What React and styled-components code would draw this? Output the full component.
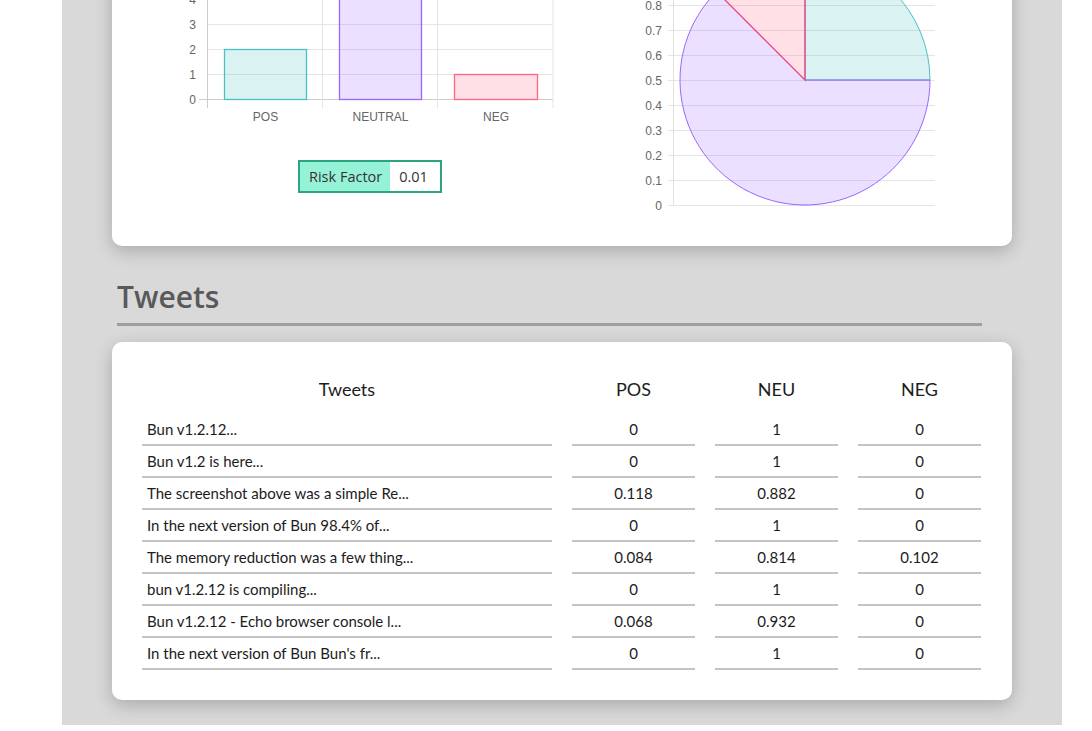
import React from "react";
import styled, { createGlobalStyle } from "styled-components";

const Global = createGlobalStyle`
  html, body { margin: 0; padding: 0; background: #ffffff; overflow: hidden; }
  body { font-family: "Lato", "Open Sans", sans-serif; }
`;

const Page = styled.div`
  display: flex;
  flex-direction: column;
  width: 1000px;
  margin-left: 62px;
  box-sizing: border-box;
  padding: 0 50px 25px;
  background: #d9d9d9;
`;

const Card = styled.div`
  background: #fff;
  border-radius: 10px;
  box-shadow: 0 5px 18px rgba(0, 0, 0, 0.22);
  box-sizing: border-box;
`;

const ChartCard = styled(Card)`
  margin-top: -60px;
  display: grid;
  grid-template-columns: 450px 450px;
  align-items: start;
`;

const ChartCol = styled.div`
  display: flex;
  flex-direction: column;
  padding-bottom: ${(p) => p.$pb || 0}px;
`;

const RiskBox = styled.div`
  display: flex;
  align-self: flex-start;
  margin: 35px 0 0 186px;
  border: 2px solid #2aa57f;
  height: 29px;
  font-family: "Open Sans", sans-serif;
  font-size: 14.5px;
  color: #333;
`;

const RiskLabel = styled.span`
  display: flex;
  align-items: center;
  padding: 0 8px 0 9px;
  background: #96f2d7;
`;

const RiskValue = styled.span`
  display: flex;
  align-items: center;
  padding: 0 12px 0 9px;
  background: #fff;
`;

const Heading = styled.h2`
  margin: 29px 30px 16px 5px;
  padding: 2px 0 6px;
  border-bottom: 3px solid #9e9e9e;
  font-family: "Open Sans", sans-serif;
  font-weight: 600;
  font-size: 30px;
  line-height: 40px;
  color: #595959;
`;

const TableCard = styled(Card)`
  padding: 32px 31px 30px 30px;
`;

const Grid = styled.div`
  display: grid;
  grid-template-columns: 410px repeat(3, 123px);
  column-gap: 20px;
  font-family: "Lato", sans-serif;
  color: #1c1c1c;
`;

const HeadCell = styled.div`
  height: 30px;
  margin-bottom: 10px;
  line-height: 30px;
  text-align: center;
  font-size: 18px;
`;

const Cell = styled.div`
  height: 30px;
  line-height: 30px;
  border-bottom: 2px solid #c4c4c4;
  font-size: 15px;
  text-align: ${(p) => (p.$left ? "left" : "center")};
  padding-left: ${(p) => (p.$left ? "5px" : "0")};
  white-space: nowrap;
`;

const AXIS_FONT = { fontFamily: "Liberation Sans, Arial, sans-serif", fontSize: 12, fill: "#666" };

function BarChart() {
  const bars = [
    { x: 112, w: 82, v: 2, label: "POS", fill: "rgba(75,192,192,0.2)", stroke: "rgb(75,192,192)" },
    { x: 227, w: 82, v: 5, label: "NEUTRAL", fill: "rgba(153,102,255,0.2)", stroke: "rgb(153,102,255)" },
    { x: 342, w: 83, v: 1, label: "NEG", fill: "rgba(255,99,132,0.2)", stroke: "rgb(255,99,132)" },
  ];
  const y0 = 159.5;
  return (
    <svg width="450" height="185" viewBox="0 0 450 185">
      {[0, 1, 2, 3, 4, 5, 6].map((v) => (
        <g key={v}>
          <line x1={v === 0 ? 87 : 95} x2="441" y1={y0 - 25 * v} y2={y0 - 25 * v} stroke={v === 0 ? "#ccc" : "#e5e5e5"} />
          <text x="84" y={y0 - 25 * v + 4} textAnchor="end" {...AXIS_FONT}>{v}</text>
        </g>
      ))}
      {[95.5, 210.5, 325.5, 441].map((x, i) => (
        <line key={x} x1={x} x2={x} y1="0" y2="168" stroke={i === 0 ? "#ccc" : "#e5e5e5"} />
      ))}
      {bars.map((b) => (
        <g key={b.label}>
          <rect x={b.x + 0.5} y={y0 - 25 * b.v} width={b.w} height={25 * b.v} fill={b.fill} stroke={b.stroke} strokeWidth="1.3" />
          <text x={b.x + b.w / 2 + 0.5} y="181" textAnchor="middle" {...AXIS_FONT}>{b.label}</text>
        </g>
      ))}
    </svg>
  );
}

function PieChart() {
  const cx = 243;
  const cy = 140;
  const r = 125;
  const d = r * Math.SQRT1_2;
  const yFor = (v) => 265.5 - v * 250;
  const vals = [0, 0.1, 0.2, 0.3, 0.4, 0.5, 0.6, 0.7, 0.8, 0.9, 1];
  return (
    <svg width="450" height="275" viewBox="0 0 450 275">
      {vals.map((v) => (
        <g key={v}>
          <line x1="106" x2="373" y1={yFor(v)} y2={yFor(v)} stroke="#e5e5e5" />
          <text x="100" y={yFor(v) + 4} textAnchor="end" {...AXIS_FONT}>{v}</text>
        </g>
      ))}
      <line x1="111.5" x2="111.5" y1="0" y2="266" stroke="#e0e0e0" />
      <path
        d={`M${cx} ${cy} L${cx} ${cy - r} A${r} ${r} 0 0 1 ${cx + r} ${cy} Z`}
        fill="rgba(75,192,192,0.2)"
        stroke="rgb(75,192,192)"
        strokeWidth="1"
      />
      <path
        d={`M${cx} ${cy} L${cx + r} ${cy} A${r} ${r} 0 1 1 ${cx - d} ${cy - d} Z`}
        fill="rgba(153,102,255,0.2)"
        stroke="rgb(153,102,255)"
        strokeWidth="1"
      />
      <path
        d={`M${cx} ${cy} L${cx - d} ${cy - d} A${r} ${r} 0 0 1 ${cx} ${cy - r} Z`}
        fill="rgba(255,99,132,0.2)"
        stroke="rgb(236,72,140)"
        strokeWidth="1.4"
      />
    </svg>
  );
}

const rows = [
  ["Bun v1.2.12...", "0", "1", "0"],
  ["Bun v1.2 is here...", "0", "1", "0"],
  ["The screenshot above was a simple Re...", "0.118", "0.882", "0"],
  ["In the next version of Bun 98.4% of...", "0", "1", "0"],
  ["The memory reduction was a few thing...", "0.084", "0.814", "0.102"],
  ["bun v1.2.12 is compiling...", "0", "1", "0"],
  ["Bun v1.2.12 - Echo browser console l...", "0.068", "0.932", "0"],
  ["In the next version of Bun Bun's fr...", "0", "1", "0"],
];

export default function App() {
  return (
    <>
      <Global />
      <Page>
        <ChartCard>
          <ChartCol $pb={53}>
            <BarChart />
            <RiskBox>
              <RiskLabel>Risk Factor</RiskLabel>
              <RiskValue>0.01</RiskValue>
            </RiskBox>
          </ChartCol>
          <ChartCol>
            <PieChart />
          </ChartCol>
        </ChartCard>
        <Heading>Tweets</Heading>
        <TableCard>
          <Grid>
            <HeadCell>Tweets</HeadCell>
            <HeadCell>POS</HeadCell>
            <HeadCell>NEU</HeadCell>
            <HeadCell>NEG</HeadCell>
            {rows.map((r, i) => (
              <React.Fragment key={i}>
                <Cell $left>{r[0]}</Cell>
                <Cell>{r[1]}</Cell>
                <Cell>{r[2]}</Cell>
                <Cell>{r[3]}</Cell>
              </React.Fragment>
            ))}
          </Grid>
        </TableCard>
      </Page>
    </>
  );
}
